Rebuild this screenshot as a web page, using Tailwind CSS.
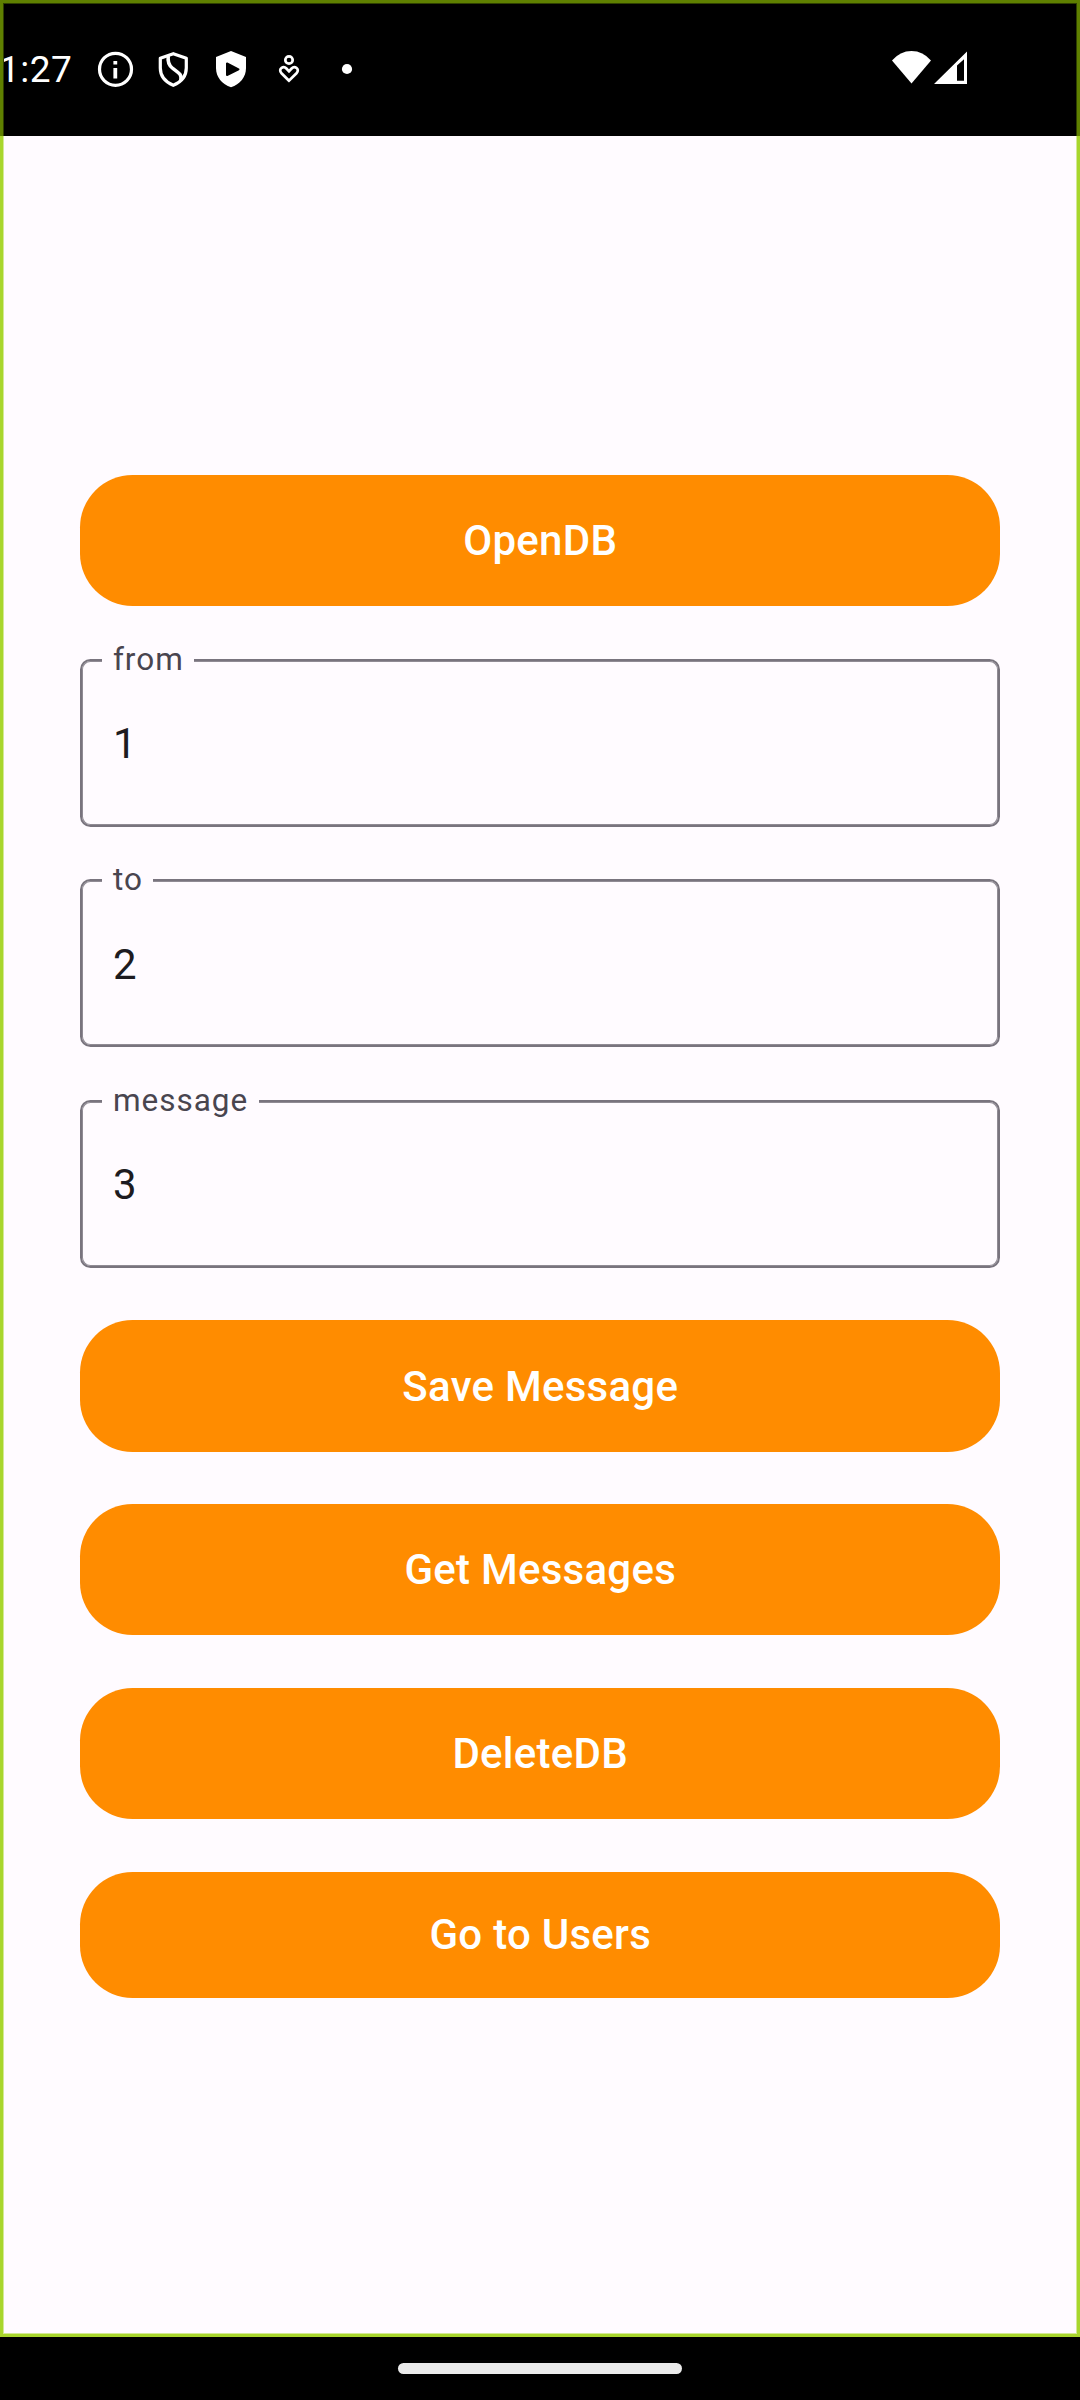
<!DOCTYPE html>
<html lang="en">
<head>
<meta charset="utf-8">
<title>Messages</title>
<script src="https://cdn.jsdelivr.net/npm/@tailwindcss/browser@4"></script>
</head>
<body class="relative flex h-[2400px] w-[1080px] flex-col overflow-hidden bg-black font-[Roboto,sans-serif]">
  <header class="flex h-[136px] shrink-0 items-center bg-black text-white">
    <span class="-ml-px w-[98px] pt-[4px] text-[37px] leading-[44px] tracking-[0.5px]">1:27</span>
    <svg class="h-[48px] w-[270px]" viewBox="97 44 270 48" fill="none" stroke="#fff">
      <circle cx="115.5" cy="69.3" r="16" stroke-width="3.2"/>
      <path d="M115.3 68v10.5M115.3 61v3.400" stroke-width="3.8"/>
      <path d="M173.300 53.700 186.300 58.300V68c0 8-5 14-13 17.300-8-3.300-13-9.300-13-17.300V58.300Z" stroke-width="3.200" stroke-linejoin="round"/>
      <path d="M168.300 56c-.9 6 .3 9 4 12 5 4 10.200 6 8.500 12.500" stroke-width="3.500"/>
      <path d="M231 51 246 57v11c0 9-6 16.500-15 19.200-9-2.700-15-10.200-15-19.200V57Z" fill="#fff" stroke="none"/>
      <path d="M227 63.500v11.500l11.500-5.700Z" fill="#000" stroke="#000" stroke-width="2" stroke-linejoin="round"/>
      <circle cx="289" cy="60" r="3.700" stroke-width="2.700"/>
      <path d="M289 80.700 281.500 73.200c-2-2.100-1.500-4.300.1-5.400 1.500-1 3.500-.7 4.800.7l2.600 2.800 2.600-2.800c1.300-1.400 3.300-1.700 4.800-.7 1.600 1.100 2.100 3.300.1 5.400Z" stroke-width="2.700"/>
      <circle cx="347" cy="69" r="5.100" fill="#fff" stroke="none"/>
    </svg>
    <svg class="ml-auto mr-[113px] h-[36px] w-[76px]" viewBox="891 50 76 36" fill="#fff">
      <path d="M892 60.500Q900 51 911.500 51T931 60.500L911.500 83.600Z"/>
      <path fill-rule="evenodd" d="M934 84 967 51.500V84ZM957 65.500V80.700h7V59.300Z"/>
    </svg>
  </header>

  <main class="flex h-[2201px] shrink-0 flex-col gap-[52.5px] bg-[#fffbff] pl-[80.4px] pr-[79.9px] pt-[339.1px] text-[42px] leading-[63px]">
    <button class="h-[131.25px] shrink-0 rounded-[52.5px] bg-[#ff8c00] font-medium tracking-[0.26px] text-white">OpenDB</button>

    <div class="relative flex h-[168px] shrink-0 items-center rounded-[10.5px] border-2 border-[#79747e] pt-[2px] pl-[30.5px] text-[#1d1b20] shadow-[inset_0_0_0_1px_#908b94]">
      <label class="absolute -top-[19px] left-[20px] bg-[#fffbff] px-[10.5px] text-[31.5px] leading-[36px] tracking-[1px] text-[#49454f]">from</label>
      <span>1</span>
    </div>
    <div class="relative flex h-[168px] shrink-0 items-center rounded-[10.5px] border-2 border-[#79747e] pt-[2px] pl-[30.5px] text-[#1d1b20] shadow-[inset_0_0_0_1px_#908b94]">
      <label class="absolute -top-[19px] left-[20px] bg-[#fffbff] px-[10.5px] text-[31.5px] leading-[36px] tracking-[1px] text-[#49454f]">to</label>
      <span>2</span>
    </div>
    <div class="relative flex h-[168px] shrink-0 items-center rounded-[10.5px] border-2 border-[#79747e] pt-[2px] pl-[30.5px] text-[#1d1b20] shadow-[inset_0_0_0_1px_#908b94]">
      <label class="absolute -top-[19px] left-[20px] bg-[#fffbff] px-[10.5px] text-[31.5px] leading-[36px] tracking-[1px] text-[#49454f]">message</label>
      <span>3</span>
    </div>

    <button class="h-[131.25px] shrink-0 rounded-[52.5px] bg-[#ff8c00] pt-[1.5px] font-medium tracking-[0.26px] text-white">Save Message</button>
    <button class="h-[131.25px] shrink-0 rounded-[52.5px] bg-[#ff8c00] font-medium tracking-[0.26px] text-white">Get Messages</button>
    <button class="h-[131.25px] shrink-0 rounded-[52.5px] bg-[#ff8c00] font-medium tracking-[0.26px] text-white">DeleteDB</button>
    <button class="h-[126px] shrink-0 rounded-[52.5px] bg-[#ff8c00] font-medium tracking-[0.26px] text-white">Go to Users</button>
  </main>

  <footer class="flex grow items-center justify-center bg-black">
    <div class="h-[11px] w-[284px] rounded-full bg-[#ebebeb]"></div>
  </footer>

  <!-- window focus outline -->
  <div class="pointer-events-none absolute inset-x-0 top-0 h-[136px] border-x-[3px] border-t-[3px] border-[#5f8000] shadow-[inset_0_1px_0_#2f4000,inset_1px_0_0_#2f4000,inset_-1px_0_0_#2f4000]"></div>
  <div class="pointer-events-none absolute inset-x-0 top-[136px] h-[2201px] border-x-[3px] border-b-[3px] border-[#a8d62d] shadow-[inset_0_-1px_0_#d4e996,inset_1px_0_0_#d4e996,inset_-1px_0_0_#d4e996]"></div>
</body>
</html>
